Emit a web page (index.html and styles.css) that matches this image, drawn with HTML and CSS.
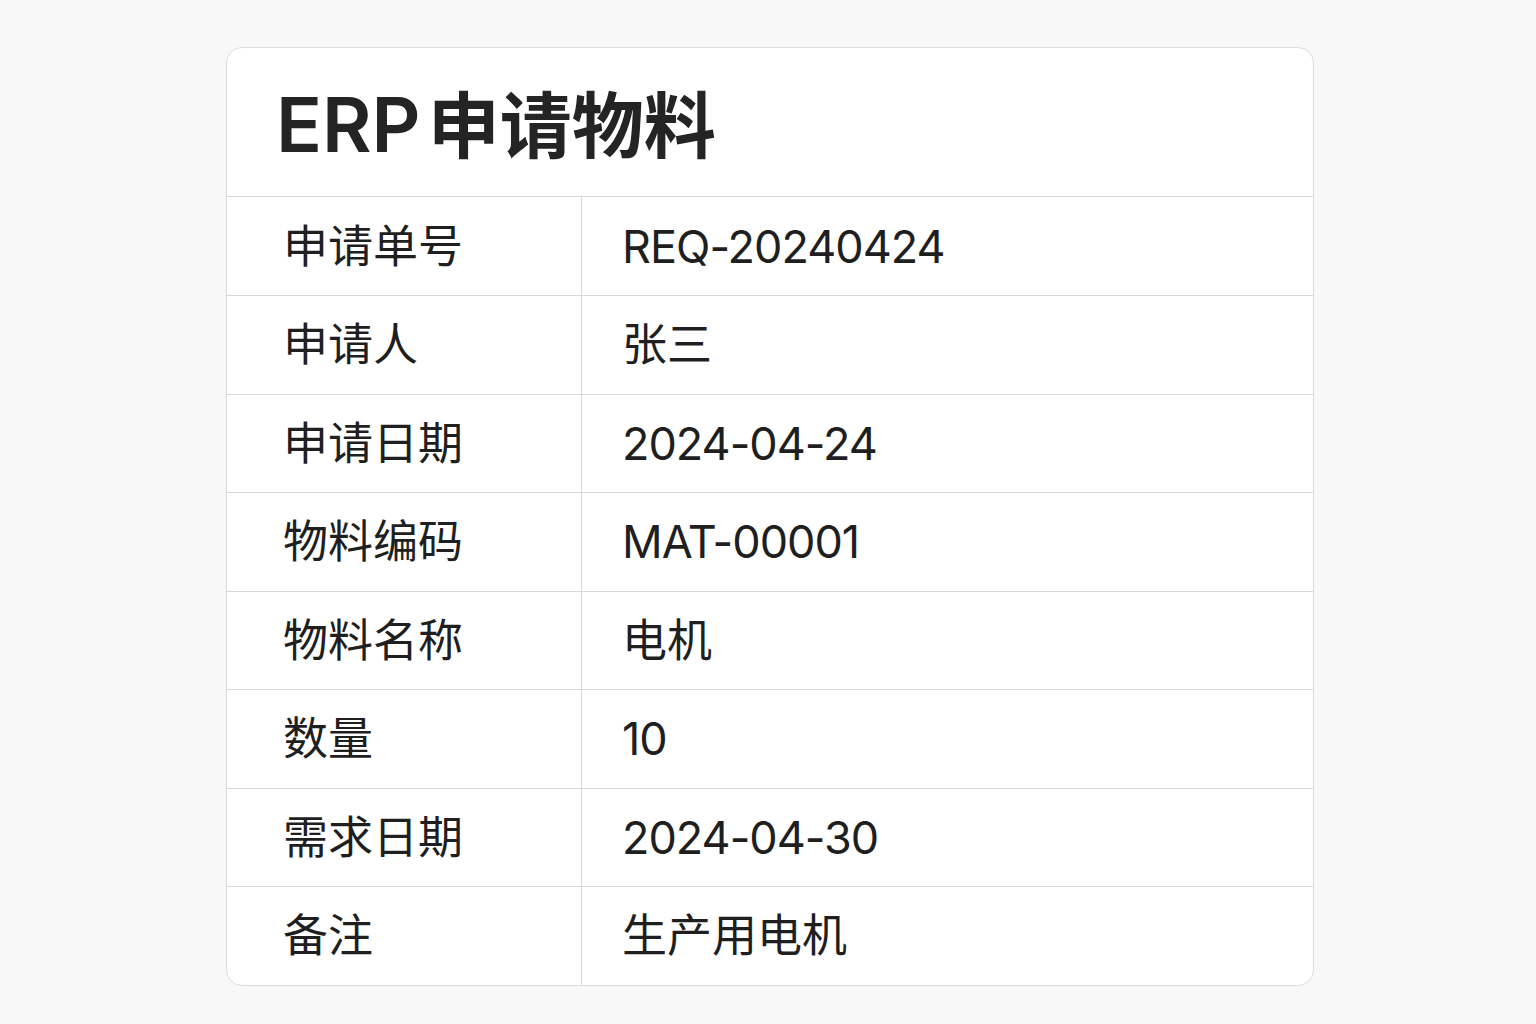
FILE: index.html
```html
<!DOCTYPE html>
<html lang="zh-CN">
<head>
<meta charset="utf-8">
<title>ERP申请物料</title>
<link rel="stylesheet" href="styles.css">
</head>
<body>
<main class="card">
  <header class="card-head"><h1 class="title"><span class="title-latin">ERP</span><span class="title-cjk">申请物料</span></h1></header>
  <div class="rows">
    <div class="row"><div class="label">申请单号</div><div class="value latin">REQ-20240424</div></div>
    <div class="row"><div class="label">申请人</div><div class="value">张三</div></div>
    <div class="row"><div class="label">申请日期</div><div class="value latin">2024-04-24</div></div>
    <div class="row"><div class="label">物料编码</div><div class="value latin">MAT-00001</div></div>
    <div class="row"><div class="label">物料名称</div><div class="value">电机</div></div>
    <div class="row"><div class="label">数量</div><div class="value latin">10</div></div>
    <div class="row"><div class="label">需求日期</div><div class="value latin">2024-04-30</div></div>
    <div class="row"><div class="label">备注</div><div class="value">生产用电机</div></div>
  </div>
</main>
</body>
</html>
```
FILE: styles.css
```css
html, body {
  margin: 0;
  padding: 0;
  background: #f8f8f8;
}
body {
  font-family: "Inter", "Noto Sans CJK SC", sans-serif;
  color: #1f1f1f;
  padding-top: 47px;
}
.card {
  box-sizing: border-box;
  width: 1088px;
  margin: 0 0 0 226px;
  background: #fff;
  border: 1.5px solid #dcdcdc;
  border-radius: 16px;
  overflow: hidden;
}
.card-head {
  box-sizing: border-box;
  height: 149px;
  padding-left: 49px;
  display: flex;
  align-items: center;
  border-bottom: 1.5px solid #d8d8d8;
}
.title {
  margin: 0;
  display: flex;
  align-items: baseline;
  gap: 7px;
  font-weight: 600;
  color: #242424;
  line-height: 1;
  padding-top: 4px;
}
.title-latin {
  font-size: 76px;
}
.title-cjk {
  font-size: 72px;
}
.row {
  display: grid;
  grid-template-columns: 355px 1fr;
  height: 98.5px;
  box-sizing: border-box;
  border-top: 1.5px solid #d8d8d8;
}
.row:first-child { border-top: none; height: 98px; }
.label, .value {
  display: flex;
  align-items: center;
  font-size: 45px;
  line-height: 1;
}
.label {
  padding-left: 56px;
  border-right: 1.5px solid #d8d8d8;
}
.value {
  padding-left: 40px;
}
.value.latin {
  letter-spacing: -1px;
}
```
